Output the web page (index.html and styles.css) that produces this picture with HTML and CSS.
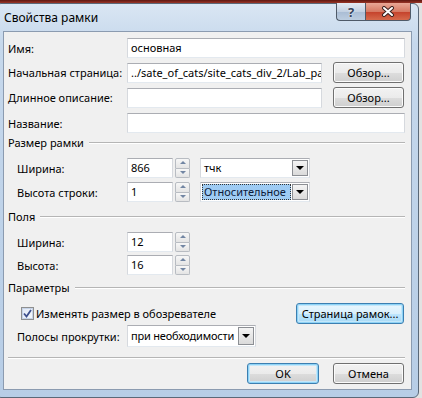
FILE: index.html
```html
<!DOCTYPE html>
<html>
<head>
    <title>Свойства рамки</title>
    <link rel="stylesheet" href="styles.css">
</head>
<body>
    <div class="window">
        <div class="titlebar">
            <span class="title">Свойства рамки</span>
            <div class="caption-buttons">
                <span class="cap-btn help">?</span>
                <span class="cap-btn close">
                    <svg width="14" height="11" viewBox="0 0 14 11">
                        <path d="M3 2 L11 9 M11 2 L3 9" stroke="#3b2320" stroke-width="4" stroke-linecap="round"/>
                        <path d="M3 2 L11 9 M11 2 L3 9" stroke="#fff" stroke-width="2" stroke-linecap="round"/>
                    </svg>
                </span>
            </div>
        </div>

        <div class="client">
            <div class="row first">
                <span class="label">Имя:</span>
                <div class="textbox grow">основная</div>
            </div>
            <div class="row tall">
                <span class="label">Начальная страница:</span>
                <div class="textbox path">../sate_of_cats/site_cats_div_2/Lab_pa</div>
                <button class="btn browse">Обзор...</button>
            </div>
            <div class="row tall">
                <span class="label">Длинное описание:</span>
                <div class="textbox path"></div>
                <button class="btn browse">Обзор...</button>
            </div>
            <div class="row r-title">
                <span class="label">Название:</span>
                <div class="textbox grow"></div>
            </div>

            <div class="group-title g-size">Размер рамки</div>
            <div class="group">
                <div class="row gap7">
                    <span class="label">Ширина:</span>
                    <div class="textbox num">866</div>
                    <div class="spin"><span class="up"></span><span class="down"></span></div>
                    <div class="combo unit">
                        <span class="combo-text">тчк</span>
                        <span class="drop"></span>
                    </div>
                </div>
                <div class="row">
                    <span class="label">Высота строки:</span>
                    <div class="textbox num">1</div>
                    <div class="spin"><span class="up"></span><span class="down"></span></div>
                    <div class="combo unit">
                        <span class="combo-text selected">Относительное</span>
                        <span class="drop"></span>
                    </div>
                </div>
            </div>

            <div class="group-title g-fields">Поля</div>
            <div class="group">
                <div class="row gap7">
                    <span class="label">Ширина:</span>
                    <div class="textbox num">12</div>
                    <div class="spin"><span class="up"></span><span class="down"></span></div>
                </div>
                <div class="row r-height">
                    <span class="label">Высота:</span>
                    <div class="textbox num">16</div>
                    <div class="spin"><span class="up"></span><span class="down"></span></div>
                </div>
            </div>

            <div class="group-title g-params">Параметры</div>
            <div class="group">
                <div class="row gap7 check-row">
                    <span class="checkbox">
                        <svg width="9" height="9" viewBox="0 0 9 9">
                            <path d="M1 4.5 L3.5 7.5 L8 1" fill="none" stroke="#3d4f8c" stroke-width="1.8"/>
                        </svg>
                    </span>
                    <span class="check-label">Изменять размер в обозревателе</span>
                    <button class="btn default frames">Страница рамок...</button>
                </div>
                <div class="row scroll-row">
                    <span class="label">Полосы прокрутки:</span>
                    <div class="combo scroll">
                        <span class="combo-text">при необходимости</span>
                        <span class="drop"></span>
                    </div>
                </div>
            </div>

            <div class="separator"></div>

            <div class="row actions">
                <button class="btn default ok">OK</button>
                <button class="btn cancel">Отмена</button>
            </div>
        </div>
    </div>
</body>
</html>
```

FILE: styles.css
```css
body {
    margin: 0;
    font-family: "Noto Sans", "Open Sans", sans-serif;
    font-size: 11px;
    color: #000;
    white-space: nowrap;
    background: linear-gradient(#5e1710 0, #9a3526 3px, #e2e2e2 3px);
    overflow: hidden;
}

.window {
    box-sizing: border-box;
    width: 424px;
    height: 395px;
    margin: 3px 0 0 -5px;
    padding: 0 6px 7px 7px;
    border: 1px solid #5a6878;
    border-radius: 6px;
    background: linear-gradient(#dae6f3, #c6d8ec 40px, #b7cde6);
    display: flex;
    flex-direction: column;
}

.titlebar {
    height: 27px;
    display: flex;
    align-items: flex-start;
}

.title {
    margin: 6px 0 0 1px;
    line-height: 16px;
    font-size: 12px;
}

.caption-buttons {
    display: flex;
    margin: -1px 1px 0 auto;
}

.cap-btn {
    box-sizing: border-box;
    height: 18px;
    display: flex;
    align-items: center;
    justify-content: center;
    border: 1px solid #4f5a68;
    border-top: none;
}

.help {
    width: 29px;
    border-radius: 0 0 0 4px;
    border-right: none;
    background: linear-gradient(#e3ebf4, #c3d1e2 50%, #a9bcd4 51%, #bccde0);
    color: #34445c;
    font-weight: bold;
    font-size: 13px;
    text-shadow: 0 0 2px #fff;
}

.close {
    width: 46px;
    border-radius: 0 0 4px 0;
    background: linear-gradient(#e9a896, #d67a64 50%, #c4402a 51%, #d66a4c);
}

.client {
    flex: 1;
    background: #f0f0f0;
    border: 1px solid #8b9bb0;
    padding: 0 6px 0 4px;
}

.row {
    display: flex;
    align-items: center;
    height: 20px;
    margin-top: 4px;
}

.row.first { margin-top: 6px; }
.row.tall { height: 21px; }
.row.r-title { margin-top: 5px; }
.row.gap7 { margin-top: 7px; }
.row.r-height { margin-top: 3px; }

.label {
    width: 119px;
    flex: none;
}

.group .label {
    width: 110px;
    padding-left: 9px;
}

.textbox {
    box-sizing: border-box;
    height: 20px;
    padding: 0 3px;
    line-height: 18px;
    background: #fff;
    border: 1px solid;
    border-color: #abadb3 #d6d9de #e3e9ef #d6d9de;
    overflow: hidden;
}

.textbox.grow { flex: 1; }
.textbox.path { width: 195px; flex: none; }
.textbox.num { width: 46px; flex: none; }

.btn {
    box-sizing: border-box;
    height: 21px;
    padding: 0;
    font-family: inherit;
    font-size: 11px;
    color: #000;
    border: 1px solid #707070;
    border-radius: 3px;
    background: linear-gradient(#f2f2f2, #ebebeb 50%, #dddddd 51%, #cfcfcf);
    box-shadow: inset 0 0 0 1px #fbfbfb;
}

.btn.default {
    border-color: #3c7fb1;
    box-shadow: inset 0 0 0 1px #8ed3f6, inset 0 0 0 2px #c4e7fa;
    background: linear-gradient(#eaf6fd, #d9f0fc 50%, #bee6fd 51%, #a7d9f5);
}

.btn.ok {
    background: linear-gradient(#f2f2f2, #ebebeb 50%, #dddddd 51%, #cfcfcf);
}

.browse {
    width: 71px;
    margin-left: 11px;
}

.spin {
    display: flex;
    flex-direction: column;
    width: 15px;
    height: 20px;
    margin-left: 2px;
    flex: none;
}

.spin span {
    flex: 1;
    position: relative;
    border: 1px solid #b8bcc2;
    background: linear-gradient(#f7f7f7, #e4e4e4);
}

.spin .up { border-radius: 2px 2px 0 0; }
.spin .down { border-top: none; border-radius: 0 0 2px 2px; }

.spin span::after {
    content: "";
    position: absolute;
    left: 4px;
    top: 2px;
    border-left: 3px solid transparent;
    border-right: 3px solid transparent;
}

.spin .up::after { border-bottom: 3px solid #7286a3; }
.spin .down::after { border-top: 3px solid #7286a3; top: 2px; }

.combo {
    box-sizing: border-box;
    height: 20px;
    display: flex;
    align-items: center;
    padding: 1px;
    background: #fff;
    border: 1px solid;
    border-color: #abadb3 #d6d9de #e3e9ef #d6d9de;
    flex: none;
}

.combo.unit {
    width: 110px;
    margin-left: 10px;
}

.combo.scroll {
    width: 129px;
    height: 22px;
}

.combo-text {
    flex: 1;
    align-self: stretch;
    padding-left: 2px;
    line-height: 16px;
    overflow: hidden;
}

.combo.scroll .combo-text {
    letter-spacing: -0.2px;
    line-height: 18px;
}

.combo-text.selected {
    background: #9ecbf3;
    color: #0c1a3a;
    outline: 1px dotted #333;
    outline-offset: -1px;
    margin-right: 1px;
}

.drop {
    box-sizing: border-box;
    width: 16px;
    align-self: stretch;
    display: flex;
    align-items: center;
    justify-content: center;
    border: 1px solid #8c8f94;
    background: linear-gradient(#f4f4f4, #dadada);
}

.drop::after {
    content: "";
    border-left: 4px solid transparent;
    border-right: 4px solid transparent;
    border-top: 4px solid #000;
}

.group-title {
    display: flex;
    align-items: center;
    height: 16px;
    line-height: 16px;
    margin-top: 2px;
}

.group-title::after {
    content: "";
    flex: 1;
    margin-left: 5px;
    border-top: 1px solid #b5b5b5;
    border-bottom: 1px solid #fff;
}

.g-fields { margin-top: 7px; }
.g-params { margin-top: 5px; }

.checkbox {
    box-sizing: border-box;
    width: 13px;
    height: 13px;
    margin-left: 13px;
    display: flex;
    align-items: center;
    justify-content: center;
    border: 1px solid #8e8f8f;
    background: linear-gradient(135deg, #dfe7f5, #f6f9fd);
    box-shadow: inset 0 0 0 1px #c6d3e8;
}

.check-label {
    margin-left: 2px;
}

.frames {
    width: 108px;
    margin: 0 1px 0 auto;
}

.scroll-row {
    height: 22px;
    margin-top: 2px;
}

.separator {
    margin-top: 10px;
    border-top: 1px solid #b5b5b5;
    border-bottom: 1px solid #fff;
}

.actions {
    justify-content: flex-end;
    margin-top: 4px;
    height: 21px;
}

.ok { width: 72px; }

.cancel {
    width: 71px;
    margin: 0 1px 0 14px;
}
```
